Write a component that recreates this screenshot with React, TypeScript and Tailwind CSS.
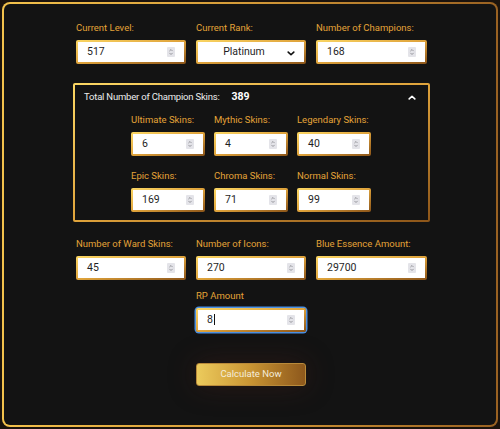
import React from "react";

interface FrameProps {
  children: React.ReactNode;
  className?: string;
}

const GoldFrame = ({ children, className = "" }: FrameProps) => (
  <div
    className={`rounded-[2px] bg-linear-to-br from-[#fbd764] via-[#dfa33b] to-[#8c5519] p-[2px] ${className}`}
  >
    {children}
  </div>
);

const Spinner = () => (
  <span className="flex h-[10px] w-[8px] shrink-0 items-center justify-center rounded-[1px] bg-[#e4e4e9]">
    <svg
      viewBox="0 0 8 10"
      className="h-[10px] w-[8px]"
      fill="none"
      stroke="#8d8d93"
      strokeWidth="0.9"
    >
      <path d="M2.4 4.1 L4 2.5 L5.6 4.1" />
      <path d="M2.4 5.9 L4 7.5 L5.6 5.9" />
    </svg>
  </span>
);

interface InputProps {
  value: string;
  focused?: boolean;
}

const NumberInput = ({ value, focused = false }: InputProps) => {
  const box = (
    <GoldFrame className="h-[24px]">
      <div className="flex h-full items-center bg-white pl-[9px] pr-[9px] text-[10.5px] text-[#1f1f1f]">
        <span className="flex-1">
          {value}
          {focused && (
            <span className="ml-[1px] inline-block h-[11px] w-px translate-y-[2px] bg-[#111]" />
          )}
        </span>
        <Spinner />
      </div>
    </GoldFrame>
  );
  if (!focused) return box;
  return (
    <div className="rounded-[3px] ring-[1.5px] ring-[#4b8fe2]">{box}</div>
  );
};

const RankSelect = () => (
  <GoldFrame className="h-[24px]">
    <div className="relative flex h-full items-center justify-center bg-white pr-[14px] text-[10.5px] text-[#1f1f1f]">
      <span>Platinum</span>
      <svg
        viewBox="0 0 10 6"
        className="absolute right-[9px] top-[9px] h-[5px] w-[8px]"
        fill="none"
        stroke="#111"
        strokeWidth="2"
        strokeLinecap="round"
        strokeLinejoin="round"
      >
        <path d="M1.5 1.2 L5 4.6 L8.5 1.2" />
      </svg>
    </div>
  </GoldFrame>
);

const Label = ({ children }: { children: React.ReactNode }) => (
  <div className="mb-[6px] h-[12px] whitespace-nowrap text-[9.5px] leading-[12px] text-[#e4a338]">
    {children}
  </div>
);

interface FieldProps {
  label: string;
  value: string;
  focused?: boolean;
}

const Field = ({ label, value, focused }: FieldProps) => (
  <div>
    <Label>{label}</Label>
    <NumberInput value={value} focused={focused} />
  </div>
);

export default function App() {
  return (
    <div className="h-[429px] w-[500px] bg-[#1b130d] p-[2px] font-[Roboto,sans-serif]">
      <div className="h-[425px] w-[496px] rounded-[8px] bg-linear-to-r from-[#f3c24c] via-[#d49a38] to-[#9a6222] p-[2px]">
        <div className="h-full w-full rounded-[6px] bg-[#131313] pl-[72px] pt-[18px]">
          <div className="w-[351px]">
            <div className="grid grid-cols-[110px_110px_111px] gap-x-[10px]">
              <Field label="Current Level:" value="517" />
              <div>
                <Label>Current Rank:</Label>
                <RankSelect />
              </div>
              <Field label="Number of Champions:" value="168" />
            </div>

            <GoldFrame className="-mx-[3px] mt-[19px]">
              <div className="h-[135px] bg-[#131313] pl-[9px] pr-[12px] pt-[6px]">
                <div className="flex h-[12px] items-center justify-between text-[9.5px] text-[#ececec]">
                  <div className="flex items-center">
                    <span className="tracking-[-0.2px]">
                      Total Number of Champion Skins:
                    </span>
                    <span className="ml-[12px] text-[10.5px] font-bold text-white">
                      389
                    </span>
                  </div>
                  <svg
                    viewBox="0 0 10 6"
                    className="h-[5px] w-[8px]"
                    fill="none"
                    stroke="#fff"
                    strokeWidth="2"
                    strokeLinecap="round"
                    strokeLinejoin="round"
                  >
                    <path d="M1.5 4.8 L5 1.4 L8.5 4.8" />
                  </svg>
                </div>
                <div className="ml-[47px] mt-[11px] grid w-[240px] grid-cols-3 gap-x-[9px] gap-y-[14px]">
                  <Field label="Ultimate Skins:" value="6" />
                  <Field label="Mythic Skins:" value="4" />
                  <Field label="Legendary Skins:" value="40" />
                  <Field label="Epic Skins:" value="169" />
                  <Field label="Chroma Skins:" value="71" />
                  <Field label="Normal Skins:" value="99" />
                </div>
              </div>
            </GoldFrame>

            <div className="mt-[16px] grid grid-cols-[110px_110px_111px] gap-x-[10px] gap-y-[10px]">
              <Field label="Number of Ward Skins:" value="45" />
              <Field label="Number of Icons:" value="270" />
              <Field label="Blue Essence Amount:" value="29700" />
              <div className="col-start-2">
                <Field label="RP Amount" value="8" focused />
              </div>
              <button className="col-start-2 mt-[21px] h-[23px] rounded-[3px] border border-[#b98a3a] bg-linear-to-r from-[#eccb5c] via-[#c99433] to-[#8d581c] text-[9.5px] text-[#f4ecda] shadow-[0_0_28px_rgba(70,30,25,0.45)]">
                Calculate Now
              </button>
            </div>
          </div>
        </div>
      </div>
    </div>
  );
}
